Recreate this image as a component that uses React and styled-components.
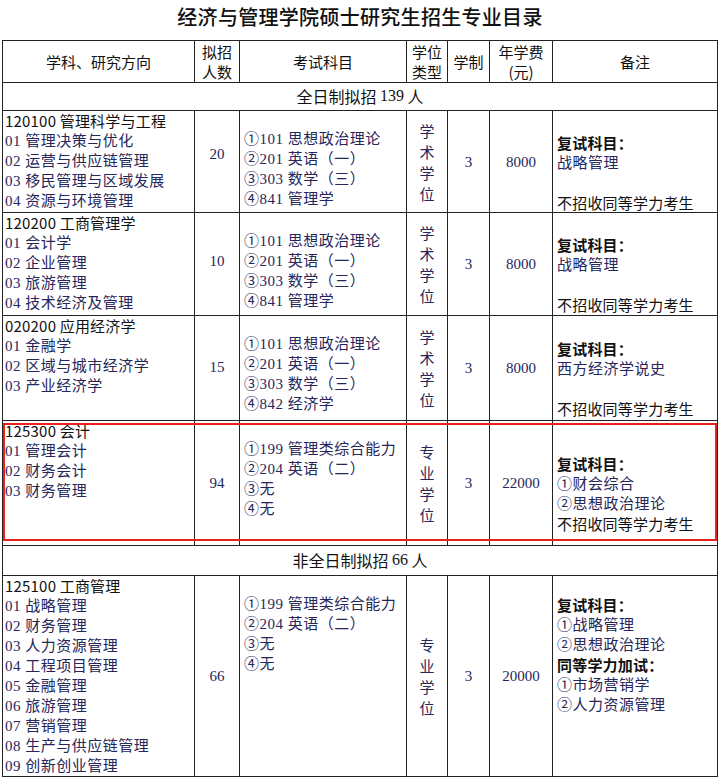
import React from 'react';
import styled, { createGlobalStyle } from 'styled-components';

const GlobalStyle = createGlobalStyle`
  body {
    margin: 0;
    background: #fff;
    font-family: "Noto Sans CJK SC", sans-serif;
    color: #111;
  }
`;

const COLS = '192px 45px 167px 41px 42px 63px 165px';
const SERIF = '"Liberation Serif", "Noto Sans CJK SC", serif';
const NAVY = '#26265a';

const Page = styled.div`
  padding: 0 2px;
  width: 716px;
`;

const Title = styled.h1`
  margin: 0;
  height: 40px;
  line-height: 34px;
  text-align: center;
  font-size: 20px;
  font-weight: 500;
  letter-spacing: 0.3px;
`;

const Table = styled.div`
  border-top: 1px solid #222;
  border-left: 1px solid #222;
  width: 716px;
  box-sizing: border-box;
`;

const Row = styled.div`
  display: grid;
  grid-template-columns: ${COLS};
  height: ${p => p.$h}px;
  position: relative;
`;

const Cell = styled.div`
  box-sizing: border-box;
  border-right: 1px solid #222;
  border-bottom: 1px solid #222;
  font-size: 15px;
  line-height: 20px;
  overflow: hidden;
`;

const HeadCell = styled(Cell)`
  display: flex;
  align-items: center;
  justify-content: center;
  text-align: center;
  color: #111;
`;

const SpanCell = styled(Cell)`
  grid-column: 1 / -1;
  display: flex;
  align-items: center;
  justify-content: center;
  font-size: 16px;
  color: #111;
  padding-bottom: 2px;
`;

const Num = styled.span`
  font-family: ${SERIF};
`;

const SubjectCell = styled(Cell)`
  padding: 0 2px;
`;

const CenterCell = styled(Cell)`
  display: flex;
  align-items: center;
  justify-content: center;
  font-family: ${SERIF};
  color: ${NAVY};
  padding-bottom: ${p => p.$lift || 0}px;
`;

const ExamCell = styled(Cell)`
  padding: 18px 4px 0;
`;

const DegreeCell = styled(Cell)`
  display: flex;
  align-items: center;
  justify-content: center;
`;

const VerticalText = styled.div`
  display: flex;
  flex-direction: column;
  align-items: center;
  line-height: 21px;
  color: ${NAVY};
`;

const RemarkCell = styled(Cell)`
  padding: ${p => p.$top}px 3px 0 4px;
`;

const Line = styled.div`
  height: 20px;
  white-space: nowrap;
  font-family: ${p => (p.$strong ? '"Noto Sans CJK SC", sans-serif' : SERIF)};
  color: ${p => (p.$strong ? '#111' : NAVY)};
  font-weight: ${p => (p.$bold ? 700 : 400)};
  letter-spacing: ${p => (p.$strong ? 0.2 : 0.5)}px;
`;

const Highlight = styled.div`
  position: absolute;
  top: 2px;
  left: 0;
  right: 1px;
  bottom: 5px;
  border: 2px solid #e8231d;
  pointer-events: none;
`;

// [text, strong (black sans), bold]
const rows = [
  {
    h: 102,
    subject: ['120100 管理科学与工程', '01 管理决策与优化', '02 运营与供应链管理', '03 移民管理与区域发展', '04 资源与环境管理'],
    count: '20',
    countLift: 16,
    exam: ['①101 思想政治理论', '②201 英语（一）', '③303 数学（三）', '④841 管理学'],
    degree: '学术学位',
    years: '3',
    fee: '8000',
    remarkTop: 22,
    remarks: [['复试科目：', true, true], ['战略管理'], [''], ['不招收同等学力考生', true]],
  },
  {
    h: 103,
    subject: ['120200 工商管理学', '01 会计学', '02 企业管理', '03 旅游管理', '04 技术经济及管理'],
    count: '10',
    countLift: 6,
    exam: ['①101 思想政治理论', '②201 英语（一）', '③303 数学（三）', '④841 管理学'],
    degree: '学术学位',
    years: '3',
    fee: '8000',
    remarkTop: 22,
    remarks: [['复试科目：', true, true], ['战略管理'], [''], ['不招收同等学力考生', true]],
  },
  {
    h: 105,
    subject: ['020200 应用经济学', '01 金融学', '02 区域与城市经济学', '03 产业经济学'],
    count: '15',
    countLift: 2,
    exam: ['①101 思想政治理论', '②201 英语（一）', '③303 数学（三）', '④842 经济学'],
    degree: '学术学位',
    years: '3',
    fee: '8000',
    remarkTop: 23,
    remarks: [['复试科目：', true, true], ['西方经济学说史'], [''], ['不招收同等学力考生', true]],
  },
  {
    h: 125,
    highlight: true,
    subject: ['125300 会计', '01 管理会计', '02 财务会计', '03 财务管理'],
    count: '94',
    exam: ['①199 管理类综合能力', '②204 英语（二）', '③无', '④无'],
    degree: '专业学位',
    years: '3',
    fee: '22000',
    remarkTop: 33,
    remarks: [['复试科目：', true, true], ['①财会综合'], ['②思想政治理论'], ['不招收同等学力考生', true]],
  },
];

const partTime = {
  h: 201,
  subject: ['125100 工商管理', '01 战略管理', '02 财务管理', '03 人力资源管理', '04 工程项目管理', '05 金融管理', '06 旅游管理', '07 营销管理', '08 生产与供应链管理', '09 创新创业管理'],
  count: '66',
  exam: ['①199 管理类综合能力', '②204 英语（二）', '③无', '④无'],
  degree: '专业学位',
  years: '3',
  fee: '20000',
  remarkTop: 19,
  remarks: [['复试科目：', true, true], ['①战略管理'], ['②思想政治理论'], ['同等学力加试：', true, true], ['①市场营销学'], ['②人力资源管理']],
};

function ProgramRow({ row }) {
  return (
    <Row $h={row.h}>
      <SubjectCell>
        {row.subject.map((s, i) => (
          <Line key={i} $strong={i === 0}>{s}</Line>
        ))}
      </SubjectCell>
      <CenterCell $lift={row.countLift}>{row.count}</CenterCell>
      <ExamCell>
        {row.exam.map((s, i) => (
          <Line key={i}>{s}</Line>
        ))}
      </ExamCell>
      <DegreeCell>
        <VerticalText>
          {row.degree.split('').map((c, i) => (
            <span key={i}>{c}</span>
          ))}
        </VerticalText>
      </DegreeCell>
      <CenterCell>{row.years}</CenterCell>
      <CenterCell>{row.fee}</CenterCell>
      <RemarkCell $top={row.remarkTop}>
        {row.remarks.map(([text, strong, bold], i) => (
          <Line key={i} $strong={strong} $bold={bold}>{text}</Line>
        ))}
      </RemarkCell>
      {row.highlight && <Highlight />}
    </Row>
  );
}

export default function App() {
  return (
    <Page>
      <GlobalStyle />
      <Title>经济与管理学院硕士研究生招生专业目录</Title>
      <Table>
        <Row $h={42}>
          <HeadCell>学科、研究方向</HeadCell>
          <HeadCell>拟招<br />人数</HeadCell>
          <HeadCell>考试科目</HeadCell>
          <HeadCell>学位<br />类型</HeadCell>
          <HeadCell>学制</HeadCell>
          <HeadCell>年学费<br />(元)</HeadCell>
          <HeadCell>备注</HeadCell>
        </Row>
        <Row $h={28}>
          <SpanCell>全日制拟招&nbsp;<Num>139</Num>&nbsp;人</SpanCell>
        </Row>
        {rows.map((r, i) => (
          <ProgramRow key={i} row={r} />
        ))}
        <Row $h={30}>
          <SpanCell>非全日制拟招&nbsp;<Num>66</Num>&nbsp;人</SpanCell>
        </Row>
        <ProgramRow row={partTime} />
      </Table>
    </Page>
  );
}
